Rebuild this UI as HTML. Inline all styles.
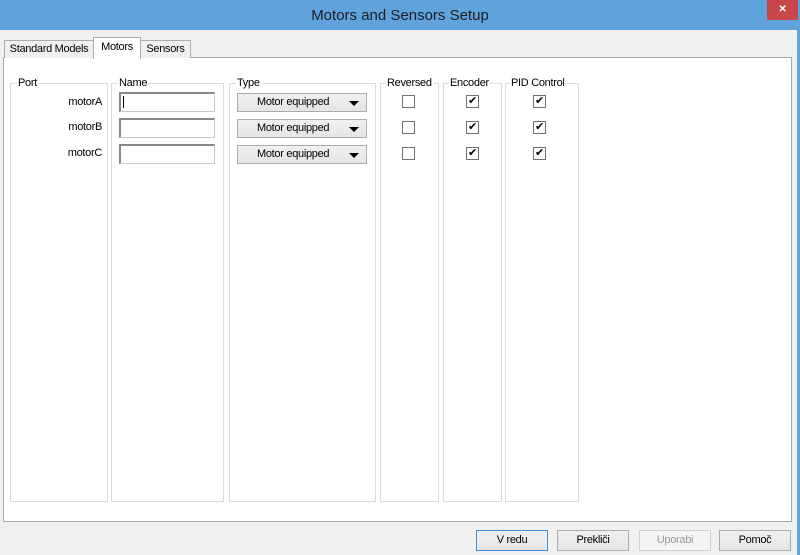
<html><head><style>
body{margin:0;width:800px;height:555px;background:#f0f0f0;font-family:"Liberation Sans",sans-serif;font-size:11px;letter-spacing:-0.3px;position:relative;overflow:hidden;color:#000}
.a{position:absolute}
.title{left:0;top:0;width:800px;height:30px;background:#5ea3dc}
.g{position:absolute;border:1px solid #dcdcdc;top:83px;height:417px}
.gl{position:absolute;top:-7px;left:6px;background:#fff;padding:0 1px;font-size:11px}
.tb{position:absolute;left:119px;width:96px;height:20px;border:1px solid #c8c8c8;border-top:2px solid #888;border-left:2px solid #888;background:#fff;box-sizing:border-box}
.dd{position:absolute;left:237px;width:130px;height:19px;border:1px solid #acacac;background:linear-gradient(#f0f0f0,#e5e5e5);box-sizing:border-box;font-size:11px;line-height:17px;padding-left:19px}
.dd:after{content:"";position:absolute;right:7px;top:7px;border-left:5px solid transparent;border-right:5px solid transparent;border-top:5px solid #000}
.cb{position:absolute;width:11px;height:11px;border:1px solid #707070;background:#fff}
.ck:after{content:"✔";position:absolute;left:1px;top:-2px;font-size:11px;font-family:"DejaVu Sans"}
.btn{position:absolute;top:530px;width:72px;height:21px;border:1px solid #acacac;background:linear-gradient(#f0f0f0,#e5e5e5);box-sizing:border-box;text-align:center;line-height:19px;font-size:11px}
</style></head><body>
<div class="a title"></div>
<div class="a" style="left:0;top:7px;width:800px;text-align:center;font-size:15px;letter-spacing:0;color:#1e1e1e">Motors and Sensors Setup</div>
<div class="a" style="left:767px;top:0;width:31px;height:20px;background:#c7474a;color:#fff;text-align:center;font-size:10px;font-weight:bold;line-height:20px">✕</div>
<div class="a" style="left:797px;top:30px;width:3px;height:525px;background:#5ea3dc"></div>
<div class="a" style="left:3px;top:57px;width:787px;height:463px;background:#fff;border:1px solid #aaa"></div>
<div class="a" style="left:4px;top:40px;width:88px;height:17px;border:1px solid #acacac;border-bottom:none;background:#f0f0f0;text-align:center;line-height:17px">Standard Models</div>
<div class="a" style="left:93px;top:37px;width:46px;height:21px;border:1px solid #acacac;border-bottom:none;background:#fff;text-align:center;line-height:18px">Motors</div>
<div class="a" style="left:140px;top:40px;width:49px;height:17px;border:1px solid #acacac;border-bottom:none;background:#f0f0f0;text-align:center;line-height:17px">Sensors</div>

<div class="g" style="left:10px;width:96px"><span class="gl">Port</span></div>
<div class="g" style="left:111px;width:111px"><span class="gl">Name</span></div>
<div class="g" style="left:229px;width:145px"><span class="gl">Type</span></div>
<div class="g" style="left:380px;width:57px"><span class="gl" style="left:5px">Reversed</span></div>
<div class="g" style="left:443px;width:57px"><span class="gl" style="left:5px">Encoder</span></div>
<div class="g" style="left:505px;width:72px"><span class="gl" style="left:4px">PID Control</span></div>

<div class="a" style="left:40px;width:62px;top:96px;text-align:right">motorA</div>
<div class="a" style="left:40px;width:62px;top:121px;text-align:right">motorB</div>
<div class="a" style="left:40px;width:62px;top:147px;text-align:right">motorC</div>

<div class="tb" style="top:92px"></div><div class="a" style="left:123px;top:96px;width:1px;height:12px;background:#000"></div>
<div class="tb" style="top:118px"></div>
<div class="tb" style="top:144px"></div>

<div class="dd" style="top:93px">Motor equipped</div>
<div class="dd" style="top:119px">Motor equipped</div>
<div class="dd" style="top:145px">Motor equipped</div>

<div class="cb" style="left:402px;top:95px"></div>
<div class="cb" style="left:402px;top:121px"></div>
<div class="cb" style="left:402px;top:147px"></div>
<div class="cb ck" style="left:466px;top:95px"></div>
<div class="cb ck" style="left:466px;top:121px"></div>
<div class="cb ck" style="left:466px;top:147px"></div>
<div class="cb ck" style="left:533px;top:95px"></div>
<div class="cb ck" style="left:533px;top:121px"></div>
<div class="cb ck" style="left:533px;top:147px"></div>

<div class="btn" style="left:476px;border-color:#3c8fd6">V redu</div>
<div class="btn" style="left:557px">Prekliči</div>
<div class="btn" style="left:639px;color:#9a9a9a;border-color:#d0d0d0;background:#f4f4f4">Uporabi</div>
<div class="btn" style="left:719px">Pomoč</div>
</body></html>
